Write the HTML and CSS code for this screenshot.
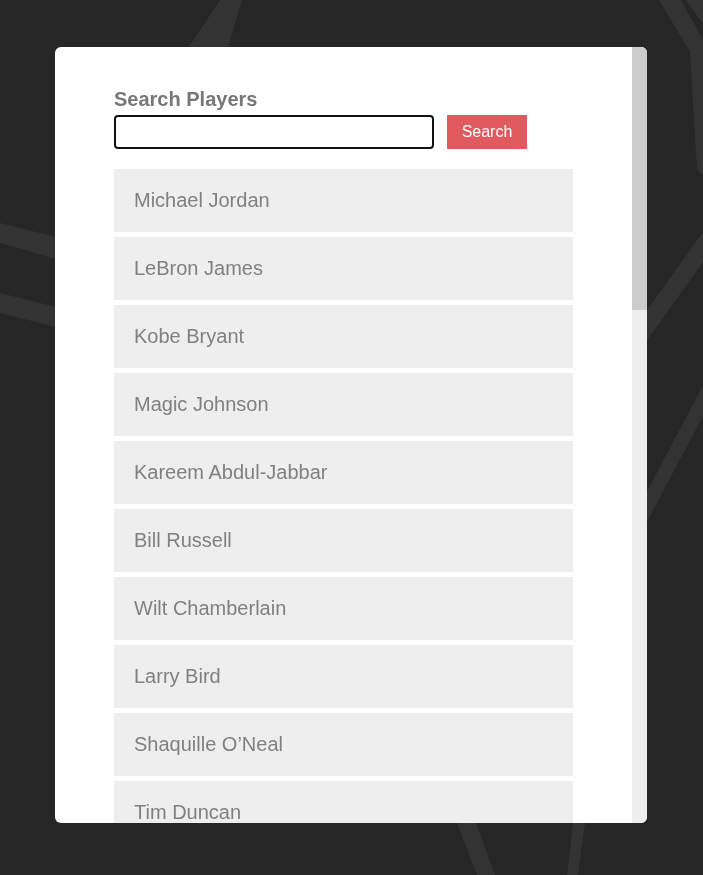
FILE: index.html
```html
<!DOCTYPE html>
<html lang="en">
<head>
<meta charset="utf-8">
<title>Search Players</title>
<link rel="stylesheet" href="styles.css">
</head>
<body>
<svg class="backdrop" width="703" height="875" viewBox="0 0 703 875" aria-hidden="true">
  <g fill="#333333">
    <polygon points="220,0 242,0 224,60 180,60"/>
    <polygon points="659,0 681,0 703,40 703,175 697,170 690,52"/>
    <polygon points="686,0 703,0 703,24"/>
    <polygon points="0,223 0,243 60,260 60,238"/>
    <polygon points="0,293 0,313 60,328 60,308"/>
    <polygon points="640,320 640,350 703,262 703,232"/>
    <polygon points="640,505 640,535 703,416 703,385"/>
    <polygon points="454,815 473,815 495,875 477,875"/>
    <polygon points="574,815 586,815 578,875 567,875"/>
  </g>
</svg>
<main class="card">
  <div class="scroll-area">
    <div class="content">
      <label class="label" for="q">Search Players</label>
      <div class="search-row">
        <input id="q" class="search-input" type="text">
        <button class="search-btn" type="button">Search</button>
      </div>
      <ul class="players">
        <li class="player">Michael Jordan</li>
        <li class="player">LeBron James</li>
        <li class="player">Kobe Bryant</li>
        <li class="player">Magic Johnson</li>
        <li class="player">Kareem Abdul-Jabbar</li>
        <li class="player">Bill Russell</li>
        <li class="player">Wilt Chamberlain</li>
        <li class="player">Larry Bird</li>
        <li class="player">Shaquille O’Neal</li>
        <li class="player">Tim Duncan</li>
        <li class="player">Hakeem Olajuwon</li>
        <li class="player">Oscar Robertson</li>
        <li class="player">Jerry West</li>
        <li class="player">Kevin Durant</li>
        <li class="player">Stephen Curry</li>
      </ul>
    </div>
  </div>
  <div class="scrollbar" aria-hidden="true">
    <div class="scrollbar-thumb"></div>
  </div>
</main>
</body>
</html>
```
FILE: styles.css
```css
html, body {
  margin: 0;
  padding: 0;
  height: 100%;
  overflow: hidden;
  background: #262626;
  font-family: "Liberation Sans", Arial, sans-serif;
}

body {
  display: flex;
  justify-content: center;
  align-items: flex-start;
  padding-right: 1px;
  box-sizing: border-box;
}

.backdrop {
  position: fixed;
  left: 0;
  top: 0;
  z-index: 0;
}

.card {
  position: relative;
  z-index: 1;
  display: flex;
  width: 592px;
  height: 776px;
  margin-top: 47px;
  background: #ffffff;
  border-radius: 6px;
  overflow: hidden;
}

.scroll-area {
  flex: 1;
  min-width: 0;
  overflow-y: auto;
  scrollbar-width: none;
}

.scroll-area::-webkit-scrollbar {
  display: none;
}

.scrollbar {
  flex: 0 0 15px;
  width: 15px;
  background: #eeeeee;
}

.scrollbar-thumb {
  height: 263px;
  background: #cccccc;
}

.content {
  padding: 41px 59px 41px 59px;
}

.label {
  display: block;
  font-size: 20px;
  font-weight: 700;
  line-height: 23px;
  color: #777777;
  margin-bottom: 4px;
}

.search-row {
  display: flex;
  gap: 13px;
  height: 34px;
}

.search-input {
  box-sizing: border-box;
  width: 320px;
  height: 34px;
  margin: 0;
  border: 2px solid #111111;
  border-radius: 4px;
  background: #ffffff;
  font-family: inherit;
  font-size: 16px;
  padding: 0 8px;
  outline: none;
}

.search-btn {
  box-sizing: border-box;
  width: 80px;
  height: 34px;
  margin: 0;
  border: none;
  background: #e05a60;
  color: #ffffff;
  font-family: inherit;
  font-size: 16px;
  padding: 0;
}

.players {
  list-style: none;
  margin: 20px 0 0;
  padding: 0;
}

.player {
  display: flex;
  align-items: center;
  box-sizing: border-box;
  height: 63px;
  margin-bottom: 5px;
  padding-left: 20px;
  background: #eeeeee;
  font-size: 20px;
  line-height: 23px;
  color: #808080;
}
```
